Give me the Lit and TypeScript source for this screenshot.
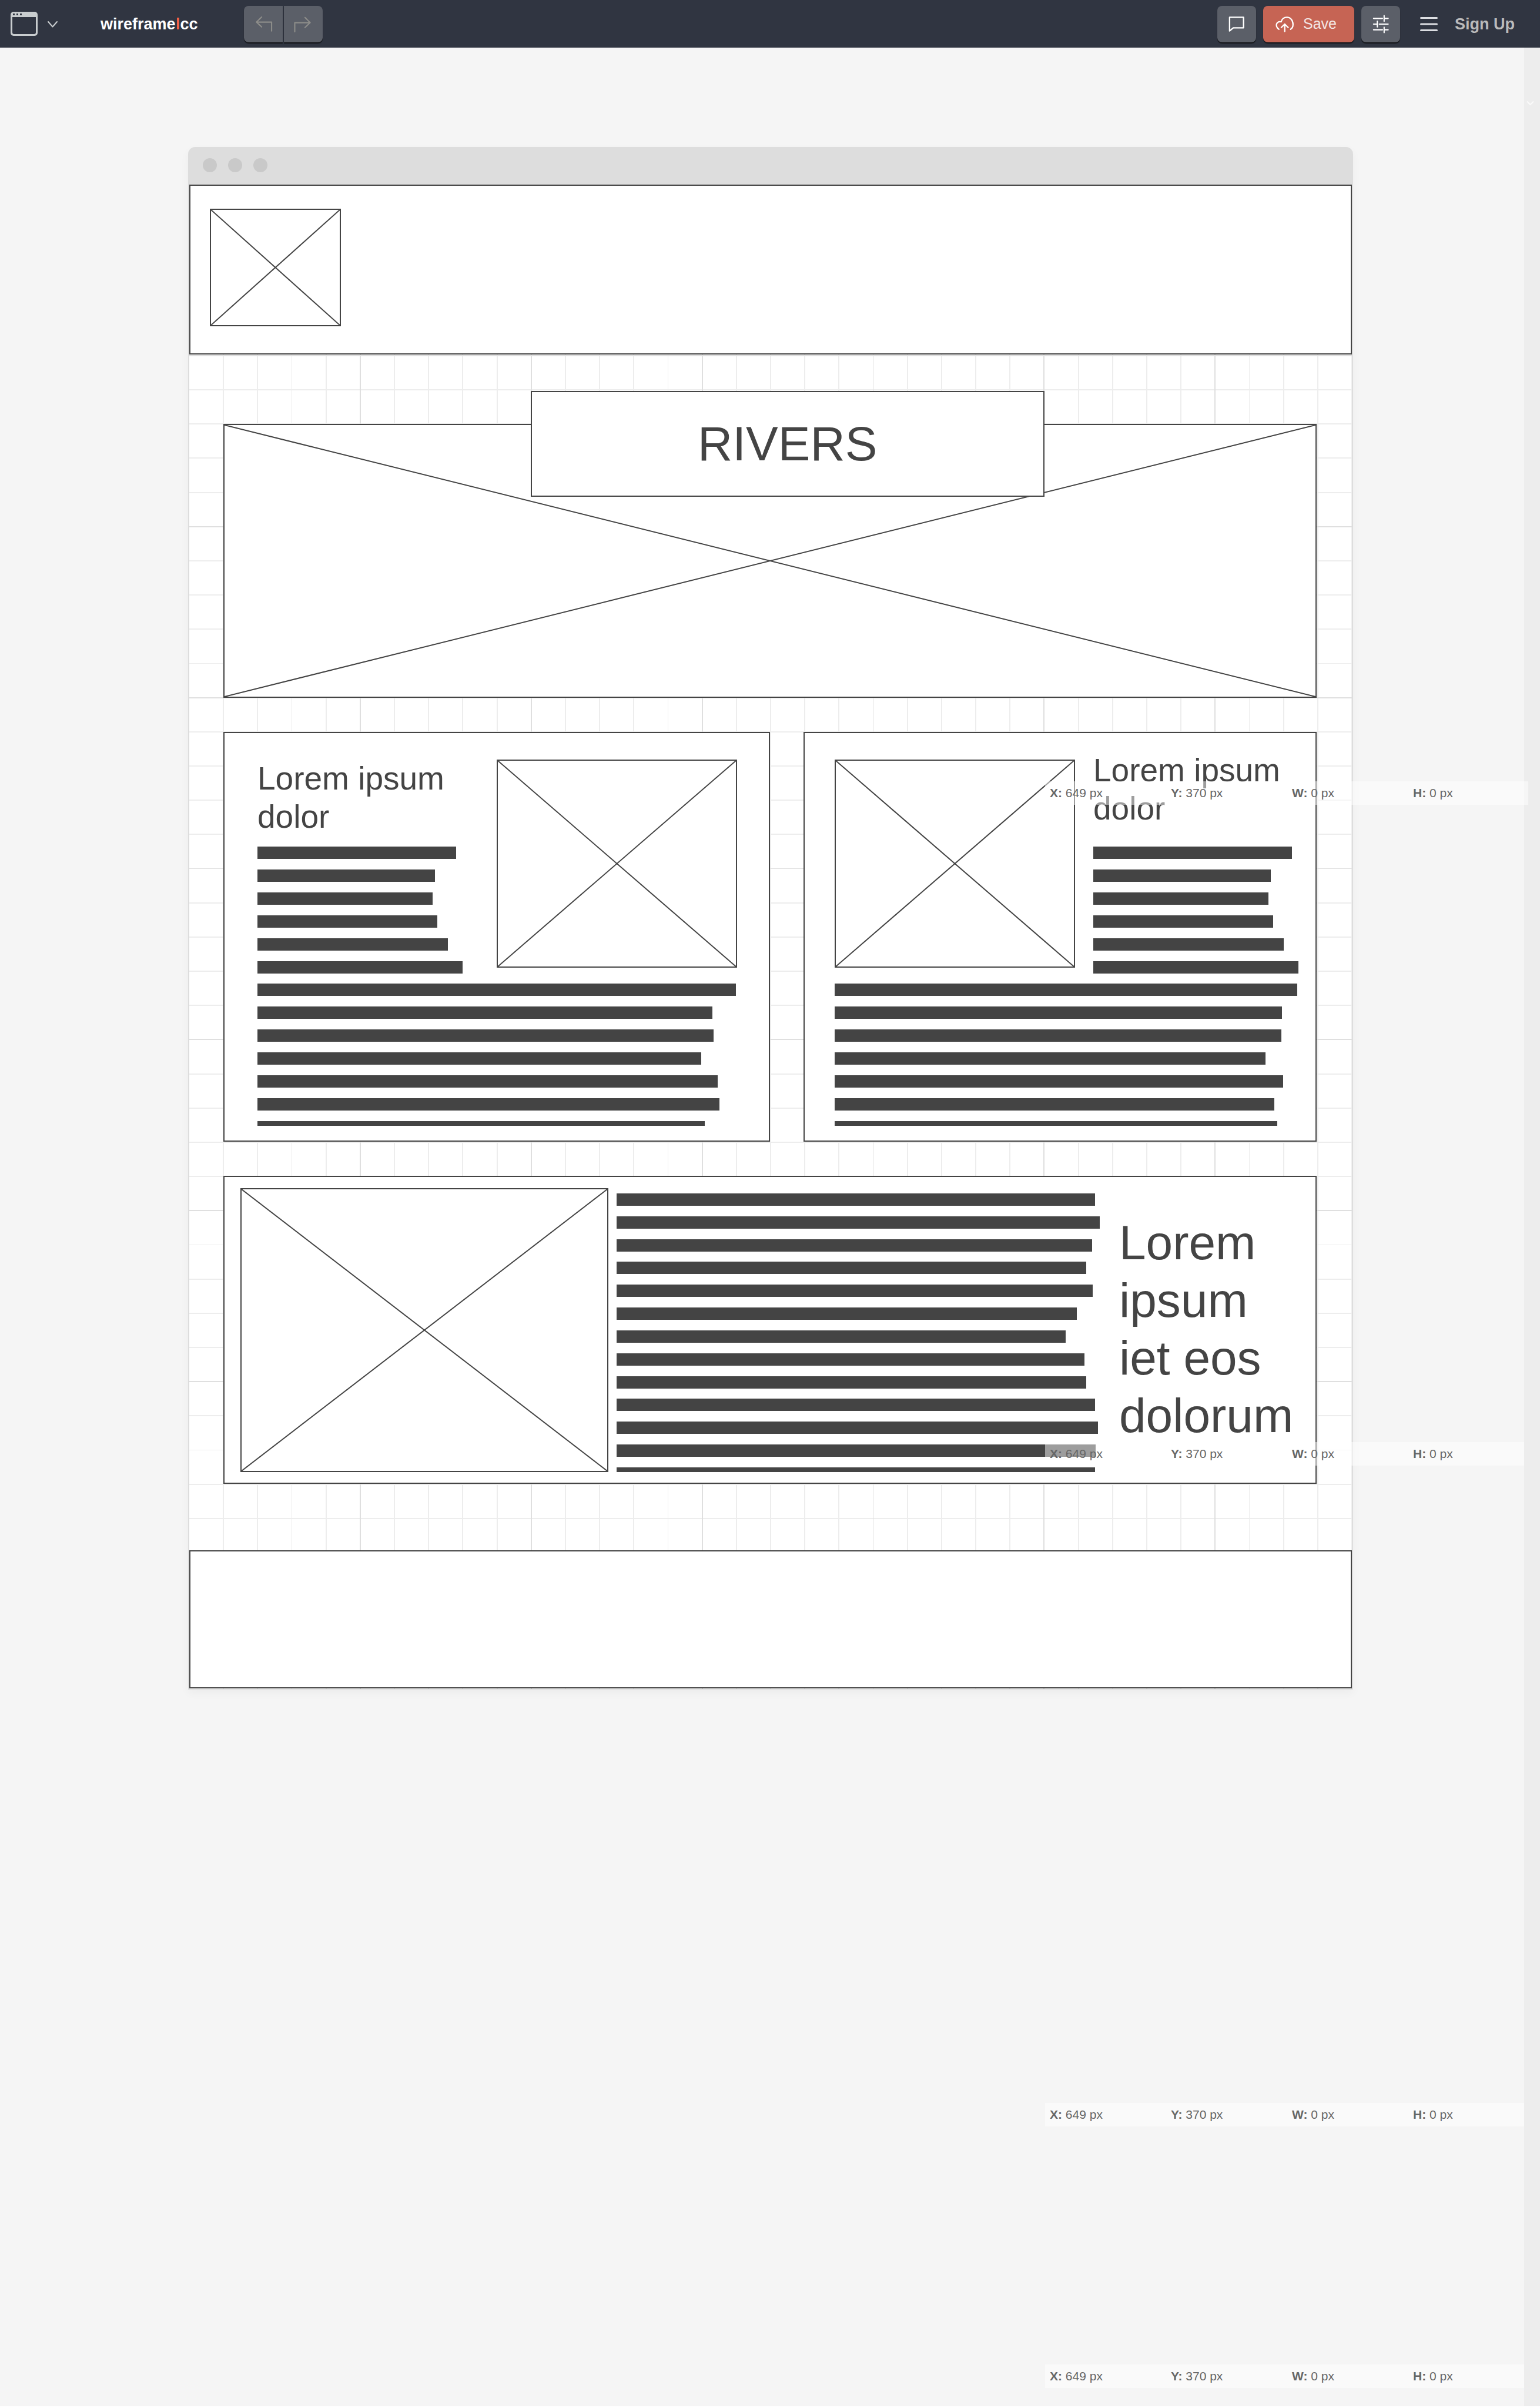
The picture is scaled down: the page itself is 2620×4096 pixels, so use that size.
import { LitElement, html, css, svg } from "lit";
import { customElement, property } from "lit/decorators.js";

/** Line lengths of the greeked paragraphs, in the units of their column's measure. */
const SIDE_LINES = [338, 302, 298, 306, 324, 349];
const LEFT_LINES = [813, 773, 775, 754, 782, 785, 760];
const RIGHT_LINES = [787, 761, 760, 733, 763, 748, 753];
const FEATURE_LINES = [814, 822, 809, 799, 810, 783, 764, 796, 799, 814, 819, 815, 814];

/** Crossed rectangle that stands for a picture. */
@customElement("wire-image")
export class WireImage extends LitElement {
  static styles = css`
    :host {
      display: block;
      box-sizing: border-box;
      border: 2px solid #444;
      background: #fff;
    }
    .cross {
      display: block;
      width: 100%;
      height: 100%;
    }
    .cross line {
      stroke: #444;
      stroke-width: 2;
      vector-effect: non-scaling-stroke;
    }
  `;

  render() {
    return html`<svg class="cross" viewBox="0 0 100 100" preserveAspectRatio="none" aria-hidden="true">
      <line x1="0" y1="0" x2="100" y2="100"></line>
      <line x1="100" y1="0" x2="0" y2="100"></line>
    </svg>`;
  }
}

/** Greeked paragraph: one solid bar for each line of text. */
@customElement("wire-text")
export class WireText extends LitElement {
  @property({ attribute: false }) lines: number[] = [];
  @property({ type: Number }) measure = 100;
  @property({ type: Boolean }) cut = false;

  static styles = css`
    :host {
      display: flex;
      flex-direction: column;
      justify-content: space-between;
      gap: 18px;
    }
    .bar {
      height: 21px;
      background: #444;
    }
    .cut {
      height: 8px;
    }
  `;

  render() {
    const last = this.lines.length - 1;
    return this.lines.map(
      (n, i) => html`<div
        class=${this.cut && i === last ? "bar cut" : "bar"}
        style="width:${(n / this.measure) * 100}%"
      ></div>`
    );
  }
}

/** Graph paper behind the sheet: a line at every step, darker at every fifth. */
@customElement("wire-grid")
export class WireGrid extends LitElement {
  static styles = css`
    :host {
      display: block;
      overflow: hidden;
    }
    .paper {
      display: block;
      width: 100%;
      height: 100%;
    }
    .minor {
      stroke: #ededed;
      stroke-width: 2;
    }
    .major {
      stroke: #dfdfdf;
      stroke-width: 2;
    }
  `;

  render() {
    const cols = Array.from({ length: 34 }, (_, i) => i + 1);
    const rows = Array.from({ length: 44 }, (_, i) => i + 1);
    const col = (k: number, c: string) =>
      svg`<line class=${c} x1=${k * 60} y1="0" x2=${k * 60} y2="2640"></line>`;
    const row = (k: number, c: string) =>
      svg`<line class=${c} x1="0" y1=${k * 60} x2="2040" y2=${k * 60}></line>`;
    return html`<svg
      class="paper"
      viewBox="0 0 2040 2640"
      preserveAspectRatio="xMinYMin slice"
      shape-rendering="crispEdges"
      aria-hidden="true"
    >
      ${cols.filter((k) => k % 5).map((k) => col(k, "minor"))}
      ${rows.filter((k) => k % 5).map((k) => row(k, "minor"))}
      ${cols.filter((k) => k % 5 === 0).map((k) => col(k, "major"))}
      ${rows.filter((k) => k % 5 === 0).map((k) => row(k, "major"))}
    </svg>`;
  }
}

/** Read-out of the pointer position and the size of the selection. */
@customElement("coord-strip")
export class CoordStrip extends LitElement {
  static styles = css`
    :host {
      display: block;
      box-sizing: border-box;
      height: 40px;
      padding-left: 8px;
      background: rgba(255, 255, 255, 0.48);
      color: #666;
      font-size: 21px;
      line-height: 40px;
    }
    .values {
      display: grid;
      grid-template-columns: repeat(4, 206px);
    }
  `;

  render() {
    return html`<div class="values">
      <span><b>X:</b> 649 px</span>
      <span><b>Y:</b> 370 px</span>
      <span><b>W:</b> 0 px</span>
      <span><b>H:</b> 0 px</span>
    </div>`;
  }
}

@customElement("tool-bar")
export class ToolBar extends LitElement {
  static styles = css`
    :host {
      display: flex;
      align-items: center;
      box-sizing: border-box;
      height: 81px;
      padding: 0 43px 0 18px;
      background: #303541;
      color: #bbb;
    }
    button {
      display: flex;
      align-items: center;
      margin: 0;
      padding: 0;
      border: 0;
      background: none;
      color: inherit;
      font: inherit;
      cursor: pointer;
    }
    svg {
      display: block;
      fill: none;
      stroke: currentColor;
      stroke-linecap: round;
      stroke-linejoin: round;
    }
    .device {
      gap: 17px;
      color: #c9cdcf;
    }
    .brand {
      margin-left: 73px;
      color: #fff;
      font-size: 27px;
      font-weight: 700;
      line-height: 30px;
      text-decoration: none;
    }
    .caret {
      display: inline-block;
      width: 4px;
      height: 20px;
      margin: 0 2px;
      background: #f05f45;
    }
    .history {
      display: flex;
      gap: 2px;
      margin-left: 78px;
      color: #8c8c89;
    }
    .key {
      width: 66px;
      height: 62px;
      border-radius: 8px;
      background: #5b5f68;
      box-shadow: 0 2px 1px #14161a;
    }
    .first {
      border-radius: 8px 0 0 8px;
    }
    .last {
      border-radius: 0 8px 8px 0;
    }
    .actions {
      display: flex;
      align-items: center;
      gap: 12px;
      margin-left: auto;
    }
    .white {
      color: #fff;
    }
    .save {
      width: 155px;
      gap: 16px;
      padding-left: 21px;
      background: #c66454;
      color: #f3e6e4;
      font-size: 25px;
    }
    .menu {
      margin-left: 22px;
      color: #dcdee2;
    }
    .sign {
      margin-left: 17px;
      color: #bbb;
      font-size: 27px;
      font-weight: 700;
      line-height: 30px;
      text-decoration: none;
    }
  `;

  render() {
    return html`
      <button class="device" aria-label="Choose device">
        <svg width="46" height="41" viewBox="0 0 46 41">
          <path
            fill="currentColor"
            stroke="none"
            fill-rule="evenodd"
            d="M5 0H41a5 5 0 0 1 5 5V36a5 5 0 0 1-5 5H5a5 5 0 0 1-5-5V5a5 5 0 0 1 5-5ZM3 9V35a3 3 0 0 0 3 3H40a3 3 0 0 0 3-3V9ZM4 3V6H7V3ZM10 3V6H13V3ZM16 3V6H19V3Z"
          />
        </svg>
        <svg width="17" height="12" viewBox="0 0 17 12" stroke-width="2"><path d="M1 2l7.500 8.500L16 2" /></svg>
      </button>
      <a class="brand" href="#">wireframe<span class="caret"></span>cc</a>
      <div class="history">
        <button class="key first" aria-label="Undo">
          <svg width="66" height="62" viewBox="0 0 68 64" stroke-width="2.200" stroke-linejoin="miter">
            <path d="M31 19.500L22 28.500L31 37M22 28.500H48.500V44" />
          </svg>
        </button>
        <button class="key last" aria-label="Redo">
          <svg width="66" height="62" viewBox="0 0 68 64" stroke-width="2.200" stroke-linejoin="miter">
            <path d="M37 20.500L46 29.500L37 38M46 29.500H19V45.500" />
          </svg>
        </button>
      </div>
      <div class="actions">
        <button class="key white" aria-label="Comments">
          <svg width="66" height="62" viewBox="0 0 68 64" stroke-width="2.400">
            <path d="M21.500 20H46V38.500H28L21.500 44Z" />
          </svg>
        </button>
        <button class="key save">
          <svg class="white" width="31" height="29" viewBox="22 16 32 30" stroke-width="2.400">
            <path
              d="M28 40.500C24.500 38.500 22.800 34.500 24 31.200C25.200 28.200 28.500 26.800 32 27.500C33 22.500 37 19.500 42 19.500C48.500 19.500 52.800 25 52.800 32C52.800 36 51.500 39 48.500 40.500M38.200 44.500V31.500M32.200 37.500L38.200 31.500L44.200 37.500"
            />
          </svg>
          Save
        </button>
        <button class="key white" aria-label="Settings">
          <svg width="66" height="62" viewBox="0 0 68 64" stroke-width="2.200">
            <path
              d="M21.500 22H37M40 17V27M40 22H47M21.500 32H28M28 27V37M31.500 32H47M21.500 42H37M40 37.500V47M40 42H47"
            />
          </svg>
        </button>
        <button class="menu" aria-label="Menu">
          <svg width="30" height="24" viewBox="0 0 30 24" stroke-width="3">
            <path d="M1.500 1.500H28.500M1.500 12H28.500M1.500 22.500H28.500" />
          </svg>
        </button>
        <a class="sign" href="#">Sign Up</a>
      </div>
    `;
  }
}

@customElement("app-root")
export class AppRoot extends LitElement {
  static styles = css`
    :host {
      display: flex;
      flex-direction: column;
      box-sizing: border-box;
      min-height: 100vh;
      padding-bottom: 3px;
      background: #fff;
      color: #444;
      font-family: "Liberation Sans", Arial, Helvetica, sans-serif;
    }
    .workspace {
      position: relative;
      flex: 1;
      box-sizing: border-box;
      padding: 169px 318px 80px 320px;
      background: #f5f5f5;
    }
    .gutter {
      position: absolute;
      top: 0;
      right: 0;
      bottom: 0;
      width: 27px;
      background: #ededed;
    }
    .gutter svg {
      display: block;
      margin: 90px 0 0 4px;
      fill: none;
      stroke: #fafafa;
      stroke-width: 2;
    }
    .window {
      border-radius: 12px 12px 0 0;
      box-shadow: 0 6px 16px rgba(0, 0, 0, 0.04);
    }
    .chrome {
      display: flex;
      align-items: center;
      gap: 19px;
      box-sizing: border-box;
      height: 64px;
      padding: 0 25px 2px;
      border-radius: 12px 12px 0 0;
      background: #ddd;
    }
    .dot {
      width: 24px;
      height: 24px;
      border-radius: 50%;
      background: #c9c9c9;
    }
    .sheet {
      position: relative;
      border: solid #ddd;
      border-width: 0 2px 1px;
      padding-bottom: 1px;
      background: #fff;
    }
    .paper {
      position: absolute;
      inset: 0;
    }
    .box {
      position: relative;
      box-sizing: border-box;
      border: 2px solid #444;
      background: #fff;
    }
    .header {
      padding: 39px 33px 46px;
    }
    .logo {
      width: 223px;
      aspect-ratio: 223 / 200;
    }
    .body {
      position: relative;
      display: flex;
      flex-direction: column;
      gap: 58px;
      padding: 118px 60px 113px 58px;
    }
    .hero {
      position: relative;
    }
    .banner {
      aspect-ratio: 1860 / 466;
    }
    .title {
      position: absolute;
      top: -56px;
      left: 28.100%;
      width: 47%;
      margin: 0;
      padding: 39px 0;
      text-align: center;
    }
    .big {
      font-size: 82px;
      font-weight: 400;
      line-height: 98px;
    }
    .small {
      font-size: 55px;
      font-weight: 400;
      line-height: 65px;
    }
    .cards {
      display: grid;
      grid-template-columns: 930fr 873fr;
      gap: 57px;
    }
    .card {
      display: flex;
      flex-direction: column;
      gap: 17px;
      padding: 45px 54px 25px 56px;
    }
    .right {
      padding: 31px 29px 25px 51px;
    }
    .top {
      display: grid;
      grid-template-columns: 351fr 409fr;
      align-items: start;
      gap: 56px;
    }
    .right .top {
      grid-template-columns: 409fr 349fr;
      gap: 31px;
    }
    .photo {
      aspect-ratio: 409 / 354;
    }
    .right .photo {
      margin-top: 14px;
    }
    .name {
      margin: 0 0 18px;
    }
    .right .name {
      margin-bottom: 32px;
    }
    .feature {
      display: grid;
      grid-template-columns: 626fr 822fr 326fr;
      gap: 14px;
      padding: 19px 27px 18px;
    }
    .scene {
      aspect-ratio: 626 / 483;
    }
    .story {
      gap: 0;
      margin-top: 9px;
    }
    .quote {
      margin: 44px 0 0;
      padding-left: 19px;
    }
    .footer {
      height: 235px;
    }
    .strip {
      position: absolute;
      left: 1778px;
      right: 27px;
    }
    .s1 {
      top: 1248px;
      right: 20px;
    }
    .s2 {
      top: 2372px;
    }
    .s3 {
      top: 3496px;
    }
    .s4 {
      top: 3941px;
    }
  `;

  render() {
    return html`
      <tool-bar></tool-bar>
      <main class="workspace">
        <div class="gutter">
          <svg width="13" height="9" viewBox="0 0 13 9" aria-hidden="true"><path d="M1 1.500l5.500 5.500L12 1.500" /></svg>
        </div>
        <div class="window">
          <div class="chrome">
            <span class="dot"></span>
            <span class="dot"></span>
            <span class="dot"></span>
          </div>
          <div class="sheet">
            <wire-grid class="paper"></wire-grid>
            <header class="box header">
              <wire-image class="logo"></wire-image>
            </header>
            <div class="body">
              <section class="hero">
                <wire-image class="banner"></wire-image>
                <h1 class="box title big">RIVERS</h1>
              </section>
              <section class="cards">
                <article class="box card">
                  <div class="top">
                    <div>
                      <h2 class="name small">Lorem ipsum dolor</h2>
                      <wire-text .lines=${SIDE_LINES} measure="351"></wire-text>
                    </div>
                    <wire-image class="photo"></wire-image>
                  </div>
                  <wire-text .lines=${LEFT_LINES} measure="815" cut></wire-text>
                </article>
                <article class="box card right">
                  <div class="top">
                    <wire-image class="photo"></wire-image>
                    <div>
                      <h2 class="name small">Lorem ipsum dolor</h2>
                      <wire-text .lines=${SIDE_LINES} measure="349"></wire-text>
                    </div>
                  </div>
                  <wire-text .lines=${RIGHT_LINES} measure="789" cut></wire-text>
                </article>
              </section>
              <section class="box feature">
                <wire-image class="scene"></wire-image>
                <wire-text class="story" .lines=${FEATURE_LINES} measure="822" cut></wire-text>
                <p class="quote big">Lorem ipsum iet eos dolorum</p>
              </section>
            </div>
            <footer class="box footer"></footer>
          </div>
        </div>
        <coord-strip class="strip s1"></coord-strip>
        <coord-strip class="strip s2"></coord-strip>
        <coord-strip class="strip s3"></coord-strip>
        <coord-strip class="strip s4"></coord-strip>
      </main>
    `;
  }
}
